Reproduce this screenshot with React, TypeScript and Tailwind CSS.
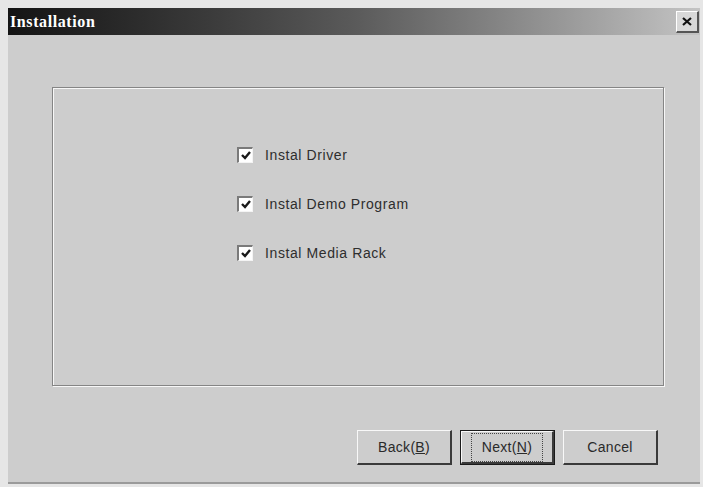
import React from "react";

const options = ["Instal Driver", "Instal Demo Program", "Instal Media Rack"];

function CheckBox() {
  return (
    <span className="w-[16px] h-[16px] flex-shrink-0 bg-white border-t-2 border-l-2 border-t-[#7a7a7a] border-l-[#7a7a7a] border-b border-r border-b-[#f4f4f4] border-r-[#f4f4f4] flex items-center justify-center">
      <svg width="10" height="9" viewBox="0 0 10 9">
        <path d="M1 4 L4 7 L9 1" stroke="#1a1a1a" strokeWidth="2.4" fill="none" />
      </svg>
    </span>
  );
}

function Button({ label, hot, isDefault }: { label: string; hot: string; isDefault?: boolean }) {
  return (
    <div
      className={`w-[95px] h-[35px] bg-[#cdcdcd] flex items-center justify-center ${
        isDefault ? "border border-[#1a1a1a]" : ""
      }`}
    >
      <div className="w-full h-full border-t border-l border-t-[#f8f8f8] border-l-[#f8f8f8] border-b-2 border-r-2 border-b-[#3a3a3a] border-r-[#3a3a3a] flex items-center justify-center">
        <span
          className={`text-[14px] text-[#2a2a2a] tracking-[0.3px] ${
            isDefault ? "border border-dotted border-[#444] px-[10px] py-[3px]" : ""
          }`}
        >
          {label}
          {hot && (
            <>
              (<span className="underline">{hot}</span>)
            </>
          )}
        </span>
      </div>
    </div>
  );
}

export default function App() {
  return (
    <div
      className="w-[703px] h-[487px] bg-[#e6e6e6] pl-[8px] pt-[8px] pr-[3px] pb-[3px]"
      style={{ fontFamily: '"Liberation Sans", Arial, sans-serif' }}
    >
      <div className="w-full h-full bg-[#cdcdcd] flex flex-col border-b-2 border-b-[#9a9a9a]">
        {/* Title bar */}
        <div className="h-[27px] flex items-center justify-between pl-[2px] pr-[1px] bg-gradient-to-r from-[#141414] via-[#5a5a5a] to-[#c4c4c4]">
          <span
            className="text-white font-bold text-[16px] tracking-[0.6px]"
            style={{ fontFamily: '"Liberation Serif", "Times New Roman", serif' }}
          >
            Installation
          </span>
          <div className="w-[23px] h-[22px] bg-[#d8d8d8] border-t border-l border-t-white border-l-white border-b-2 border-r-2 border-b-[#555] border-r-[#555] flex items-center justify-center">
            <svg width="10" height="9" viewBox="0 0 10 9">
              <path d="M1 1 L9 8 M9 1 L1 8" stroke="#111" strokeWidth="2.2" />
            </svg>
          </div>
        </div>

        {/* Body */}
        <div className="flex-1 flex flex-col pt-[52px] pl-[44px]">
          <div className="w-[612px] h-[299px] border border-[#858585] shadow-[1px_1px_0_#f7f7f7,inset_1px_1px_0_#f7f7f7] flex flex-col pt-[59px] pl-[184px] gap-[33px]">
            {options.map((o) => (
              <div key={o} className="flex items-center gap-[12px] h-[16px]">
                <CheckBox />
                <span className="text-[14px] text-[#2e2e2e] tracking-[0.6px]">{o}</span>
              </div>
            ))}
          </div>

          <div className="flex gap-[8px] mt-[44px] ml-[305px]">
            <Button label="Back" hot="B" />
            <Button label="Next" hot="N" isDefault />
            <Button label="Cancel" hot="" />
          </div>
        </div>
      </div>
    </div>
  );
}
